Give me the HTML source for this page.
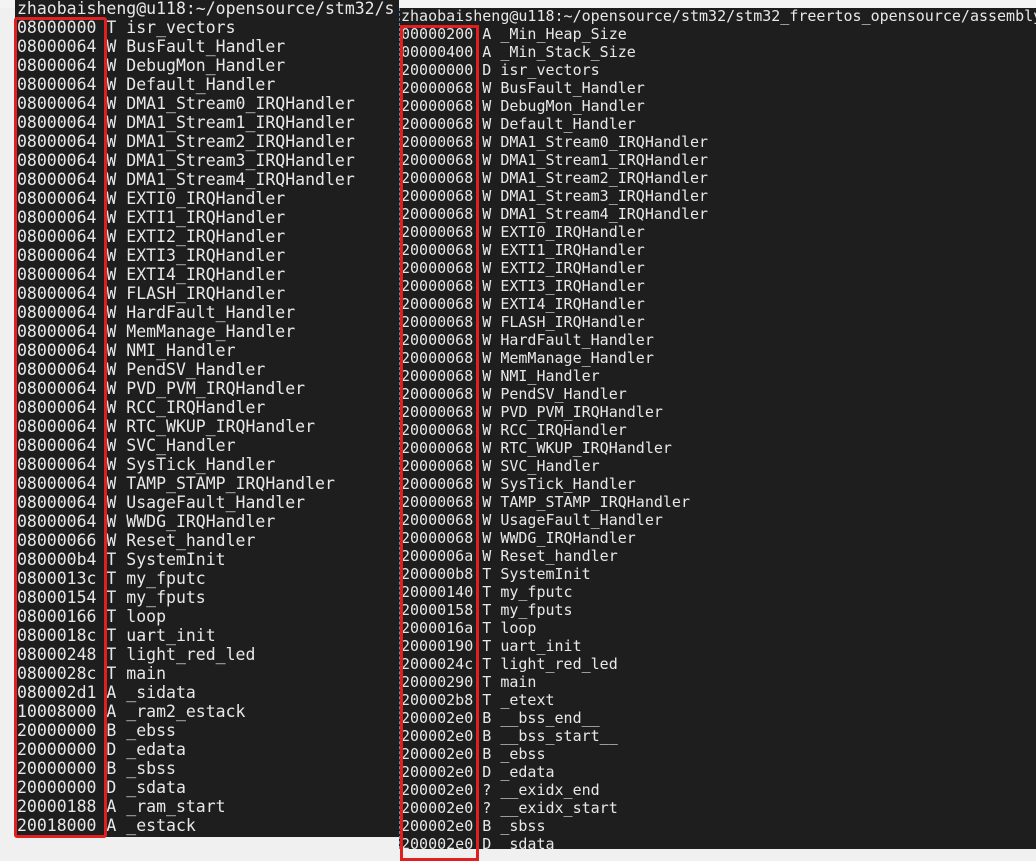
<!DOCTYPE html>
<html><head><style>
body{margin:0;width:1036px;height:849px;overflow:hidden;background:#f0f0f0;position:relative;font-family:"DejaVu Sans Mono","Liberation Mono",monospace;}
#l{position:absolute;left:15px;top:0;width:384px;height:837px;background:#1e1e1e;overflow:hidden}
#lt{position:absolute;left:2px;top:-1px;font-size:16.5px;line-height:19px;color:#e8e8e8;white-space:pre}
#r{position:absolute;left:399px;top:8px;width:637px;height:841px;background:#1e1e1e;overflow:hidden;border-left:1px dashed #6a8aaa}
#rt{position:absolute;left:1px;top:-1px;font-size:15px;line-height:18px;color:#e8e8e8;white-space:pre}
.box{position:absolute;border:3px solid #e02020;border-radius:3px}
#topbar{position:absolute;left:0;top:0;width:1036px;height:8px;background:#f4f4f4}
</style></head><body>
<div id="topbar"></div>
<div id="l"><div id="lt">zhaobaisheng@u118:~/opensource/stm32/s
08000000 T isr_vectors
08000064 W BusFault_Handler
08000064 W DebugMon_Handler
08000064 W Default_Handler
08000064 W DMA1_Stream0_IRQHandler
08000064 W DMA1_Stream1_IRQHandler
08000064 W DMA1_Stream2_IRQHandler
08000064 W DMA1_Stream3_IRQHandler
08000064 W DMA1_Stream4_IRQHandler
08000064 W EXTI0_IRQHandler
08000064 W EXTI1_IRQHandler
08000064 W EXTI2_IRQHandler
08000064 W EXTI3_IRQHandler
08000064 W EXTI4_IRQHandler
08000064 W FLASH_IRQHandler
08000064 W HardFault_Handler
08000064 W MemManage_Handler
08000064 W NMI_Handler
08000064 W PendSV_Handler
08000064 W PVD_PVM_IRQHandler
08000064 W RCC_IRQHandler
08000064 W RTC_WKUP_IRQHandler
08000064 W SVC_Handler
08000064 W SysTick_Handler
08000064 W TAMP_STAMP_IRQHandler
08000064 W UsageFault_Handler
08000064 W WWDG_IRQHandler
08000066 W Reset_handler
080000b4 T SystemInit
0800013c T my_fputc
08000154 T my_fputs
08000166 T loop
0800018c T uart_init
08000248 T light_red_led
0800028c T main
080002d1 A _sidata
10008000 A _ram2_estack
20000000 B _ebss
20000000 D _edata
20000000 B _sbss
20000000 D _sdata
20000188 A _ram_start
20018000 A _estack</div></div>
<div id="r"><div id="rt">zhaobaisheng@u118:~/opensource/stm32/stm32_freertos_opensource/assembly
00000200 A _Min_Heap_Size
00000400 A _Min_Stack_Size
20000000 D isr_vectors
20000068 W BusFault_Handler
20000068 W DebugMon_Handler
20000068 W Default_Handler
20000068 W DMA1_Stream0_IRQHandler
20000068 W DMA1_Stream1_IRQHandler
20000068 W DMA1_Stream2_IRQHandler
20000068 W DMA1_Stream3_IRQHandler
20000068 W DMA1_Stream4_IRQHandler
20000068 W EXTI0_IRQHandler
20000068 W EXTI1_IRQHandler
20000068 W EXTI2_IRQHandler
20000068 W EXTI3_IRQHandler
20000068 W EXTI4_IRQHandler
20000068 W FLASH_IRQHandler
20000068 W HardFault_Handler
20000068 W MemManage_Handler
20000068 W NMI_Handler
20000068 W PendSV_Handler
20000068 W PVD_PVM_IRQHandler
20000068 W RCC_IRQHandler
20000068 W RTC_WKUP_IRQHandler
20000068 W SVC_Handler
20000068 W SysTick_Handler
20000068 W TAMP_STAMP_IRQHandler
20000068 W UsageFault_Handler
20000068 W WWDG_IRQHandler
2000006a W Reset_handler
200000b8 T SystemInit
20000140 T my_fputc
20000158 T my_fputs
2000016a T loop
20000190 T uart_init
2000024c T light_red_led
20000290 T main
200002b8 T _etext
200002e0 B __bss_end__
200002e0 B __bss_start__
200002e0 B _ebss
200002e0 D _edata
200002e0 ? __exidx_end
200002e0 ? __exidx_start
200002e0 B _sbss
200002e0 D _sdata</div></div>
<div class="box" style="left:14px;top:17px;width:87px;height:815px"></div>
<div class="box" style="left:400px;top:25px;width:73px;height:830px;border-radius:0"></div>
</body></html>
